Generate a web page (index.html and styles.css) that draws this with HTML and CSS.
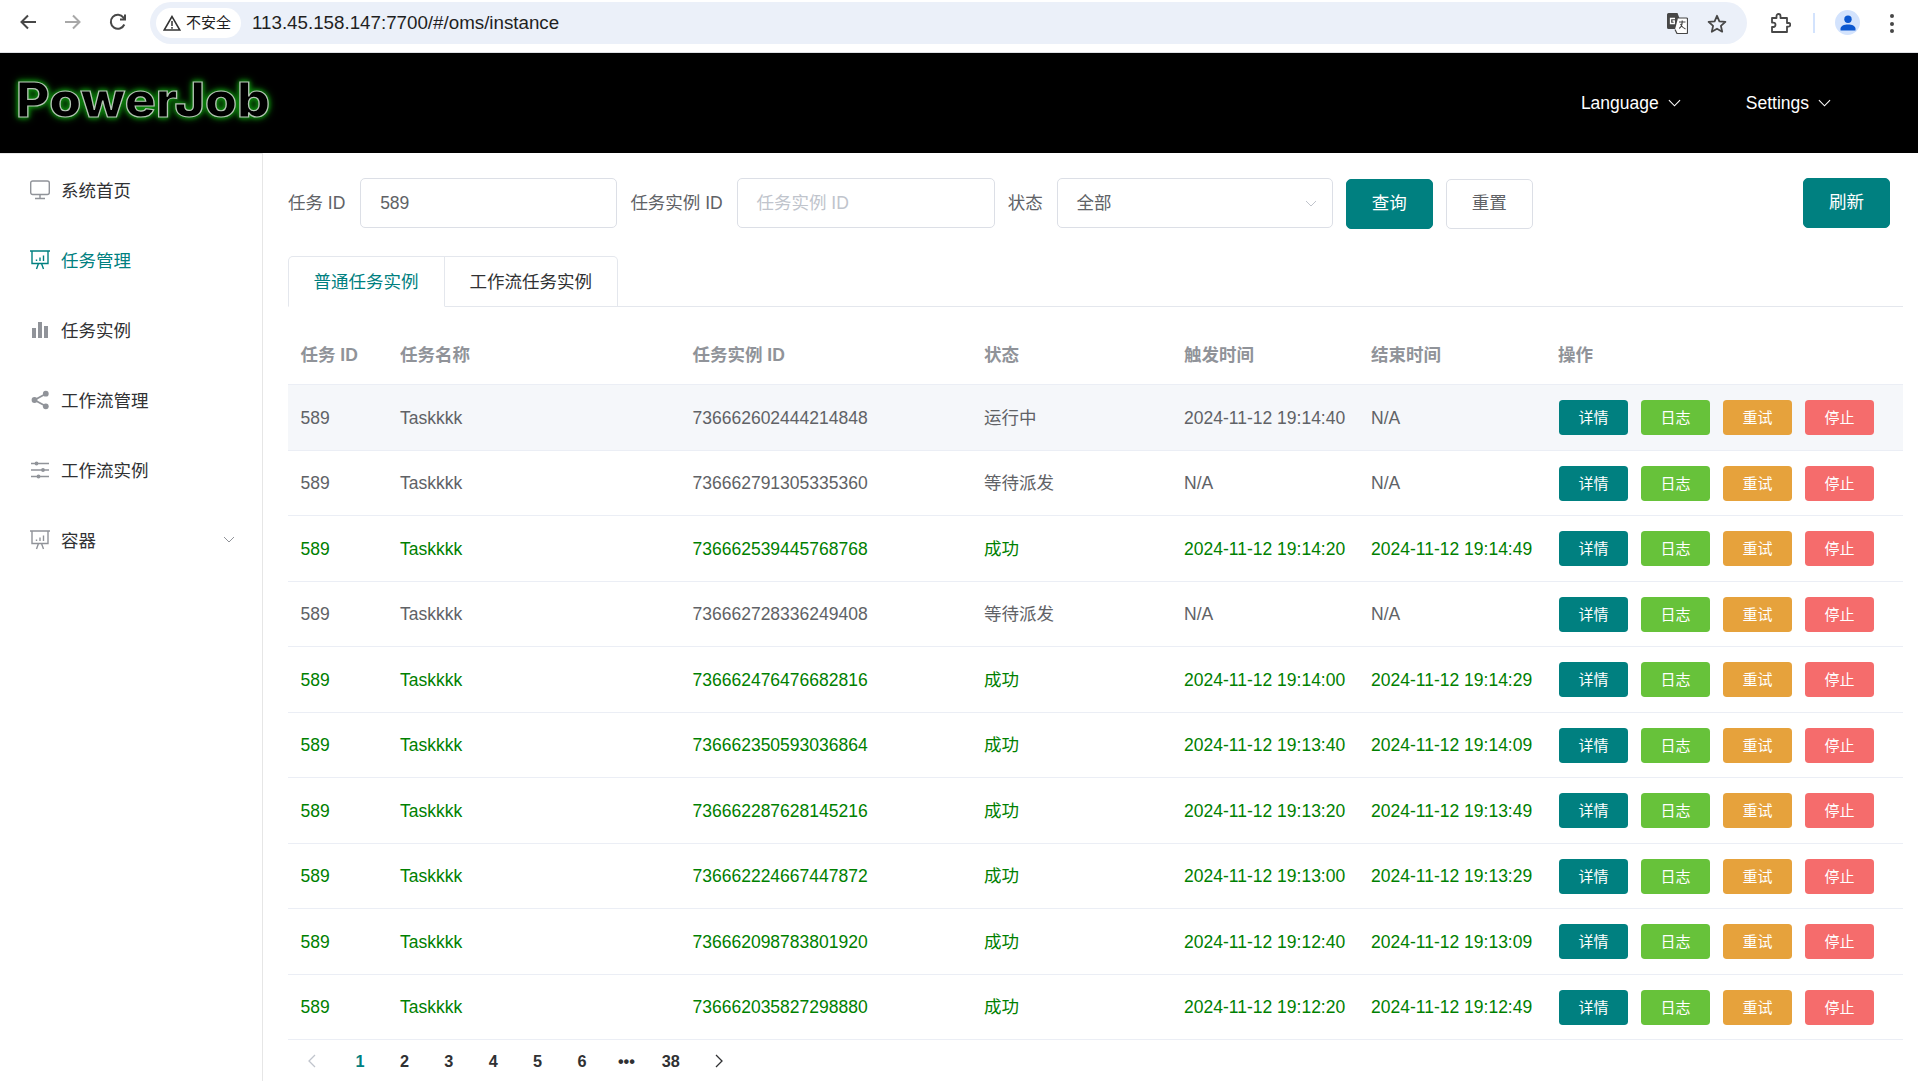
FILE: index.html
```html
<!DOCTYPE html>
<html lang="zh">
<head>
<meta charset="utf-8">
<title>PowerJob</title>
<link rel="stylesheet" href="styles.css">
</head>
<body>
<div class="toolbar">
  <div class="nav">
    <svg class="nav-icon" viewBox="0 0 20 20"><path d="M18 10H4M10 3.500 3.500 10l6.500 6.500" class="st-dark"/></svg>
    <svg class="nav-icon" viewBox="0 0 20 20"><path d="M2 10h14M10 3.500l6.500 6.500-6.500 6.500" class="st-light"/></svg>
    <svg class="nav-icon" viewBox="0 0 20 20"><path d="M16.300 12.500A7 7 0 1 1 15.500 5.600L17 7.200M17 2.500v5h-5" class="st-dark"/></svg>
  </div>
  <div class="omnibox">
    <div class="chip">
      <svg class="warn" viewBox="0 0 18 16"><path d="M9 1.500 1.200 15h15.600Z" class="st-warn"/><path d="M9 6v5M9 12v1.700" class="st-warn"/></svg>
      <span>不安全</span>
    </div>
    <span class="url">113.45.158.147:7700/#/oms/instance</span>
    <svg class="translate" viewBox="0 0 21 21"><path d="M1.500 0h9l6 16h-15a1.500 1.500 0 0 1-1.500-1.500v-13A1.500 1.500 0 0 1 1.500 0Z" fill="#474747"/><path d="M8 5.500H3.500v5h3.800V8H5.500" fill="none" stroke="#fff" stroke-width="1.300"/><path d="M11 5h8.500A1 1 0 0 1 20.500 6v13.500a1 1 0 0 1-1 1H10l-2-4" fill="#fff" stroke="#474747" stroke-width="1.200"/><path d="M12 9h6.500M15.200 7.500V9c0 3-1 5-3 6.500M13.500 11c.8 2 2.500 4 5 5" fill="none" stroke="#474747" stroke-width="1.100"/></svg>
    <svg class="star" viewBox="0 0 20 19"><path d="M10 1.800 12.400 7.300l6 .6-4.500 4 1.300 5.800L10 14.700l-5.200 3 1.300-5.800-4.500-4 6-.6Z" class="st-dark2"/></svg>
  </div>
  <svg class="puzzle" viewBox="0 0 20 20"><path d="M1 5h4.500V3a2 2 0 0 1 4 0v2H16v5h1.500a1.800 1.800 0 0 1 0 3.600H16V19H1v-5h1.300a2.200 2.200 0 0 0 0-4.400H1Z" class="st-dark2"/></svg>
  <div class="sep"></div>
  <div class="avatar"><svg class="person" viewBox="0 0 16 16"><circle cx="8" cy="4.200" r="3.700" fill="#0b57d0"/><path d="M.5 15.500v-1.800C.5 11 4 9.500 8 9.500s7.500 1.500 7.500 4.200v1.800Z" fill="#0b57d0"/></svg></div>
  <div class="dots"><i></i><i></i><i></i></div>
</div>

<header class="header">
  <svg class="logo" viewBox="0 0 290 70"><text x="16" y="48" textLength="254" lengthAdjust="spacingAndGlyphs" class="logo-text">PowerJob</text></svg>
  <nav class="header-menu">
    <div class="header-item"><span>Language</span><svg class="caret" viewBox="0 0 14 8"><path d="M1 1l6 6 6-6"/></svg></div>
    <div class="header-item"><span>Settings</span><svg class="caret" viewBox="0 0 14 8"><path d="M1 1l6 6 6-6"/></svg></div>
  </nav>
</header>

<div class="layout">
  <aside class="sidebar">
    <div class="menu-item">
      <svg class="menu-icon" viewBox="0 0 20 20"><rect x=".7" y="1" width="18.600" height="13.500" rx="2" class="ic"/><path d="M10 14.500V18M5 18.500h10" class="ic"/></svg>
      <span>系统首页</span>
    </div>
    <div class="menu-item active">
      <svg class="menu-icon" viewBox="0 0 20 20"><path d="M0 1h20M2 1v12.500h16V1M6.500 19l2-5.500M13.500 19l-2-5.500" class="ic"/><path d="M6.500 9.500v1.500M10 7.500v3.500M13.500 5.500v5.500" class="ic"/></svg>
      <span>任务管理</span>
    </div>
    <div class="menu-item">
      <svg class="menu-icon" viewBox="0 0 20 20"><path d="M2 8h4v10H2ZM8 2h4v16H8ZM14 6h4v12h-4Z" class="ic-fill"/></svg>
      <span>任务实例</span>
    </div>
    <div class="menu-item">
      <svg class="menu-icon" viewBox="0 0 20 20"><path d="M15.500 4 4.500 10l11 6" class="ic-thick"/><circle cx="15.800" cy="3.700" r="2.900" class="ic-fill"/><circle cx="4.500" cy="10" r="2.900" class="ic-fill"/><circle cx="15.800" cy="16.300" r="2.900" class="ic-fill"/></svg>
      <span>工作流管理</span>
    </div>
    <div class="menu-item">
      <svg class="menu-icon" viewBox="0 0 20 20"><path d="M1 3.500h18M1 10h18M1 16.500h18" class="ic"/><circle cx="6.500" cy="3.500" r="1.900" class="ic-fill"/><circle cx="13" cy="10" r="1.900" class="ic-fill"/><circle cx="8.500" cy="16.500" r="1.900" class="ic-fill"/></svg>
      <span>工作流实例</span>
    </div>
    <div class="menu-item">
      <svg class="menu-icon" viewBox="0 0 20 20"><path d="M0 1h20M2 1v12.500h16V1M6.500 19l2-5.500M13.500 19l-2-5.500" class="ic"/><path d="M6.500 9.500v1.500M10 7.500v3.500M13.500 5.500v5.500" class="ic"/></svg>
      <span>容器</span>
      <svg class="menu-caret" viewBox="0 0 12 7"><path d="M1 1l5 5 5-5"/></svg>
    </div>
  </aside>

  <main class="main">
    <div class="form">
      <label class="label">任务 ID</label>
      <div class="input w1">589</div>
      <label class="label label-tight">任务实例 ID</label>
      <div class="input w2 placeholder">任务实例 ID</div>
      <label class="label label-tight">状态</label>
      <div class="input w3">全部<svg class="select-caret" viewBox="0 0 12 7"><path d="M1 1l5 5 5-5"/></svg></div>
      <button class="btn btn-primary btn-low">查询</button>
      <button class="btn btn-plain btn-low">重置</button>
      <button class="btn btn-primary btn-right">刷新</button>
    </div>

    <div class="tabs">
      <div class="tab tab-active">普通任务实例</div>
      <div class="tab">工作流任务实例</div>
    </div>

    <table class="table">
      <colgroup>
        <col class="c1"><col class="c2"><col class="c3"><col class="c4"><col class="c5"><col class="c6"><col class="c7">
      </colgroup>
      <thead>
        <tr><th>任务 ID</th><th>任务名称</th><th>任务实例 ID</th><th>状态</th><th>触发时间</th><th>结束时间</th><th>操作</th></tr>
      </thead>
      <tbody>
        <tr class="row-hover"><td>589</td><td>Taskkkk</td><td>736662602444214848</td><td>运行中</td><td>2024-11-12 19:14:40</td><td>N/A</td><td><div class="ops"><span class="op op-teal">详情</span><span class="op op-green">日志</span><span class="op op-orange">重试</span><span class="op op-red">停止</span></div></td></tr>
        <tr><td>589</td><td>Taskkkk</td><td>736662791305335360</td><td>等待派发</td><td>N/A</td><td>N/A</td><td><div class="ops"><span class="op op-teal">详情</span><span class="op op-green">日志</span><span class="op op-orange">重试</span><span class="op op-red">停止</span></div></td></tr>
        <tr class="ok"><td>589</td><td>Taskkkk</td><td>736662539445768768</td><td>成功</td><td>2024-11-12 19:14:20</td><td>2024-11-12 19:14:49</td><td><div class="ops"><span class="op op-teal">详情</span><span class="op op-green">日志</span><span class="op op-orange">重试</span><span class="op op-red">停止</span></div></td></tr>
        <tr><td>589</td><td>Taskkkk</td><td>736662728336249408</td><td>等待派发</td><td>N/A</td><td>N/A</td><td><div class="ops"><span class="op op-teal">详情</span><span class="op op-green">日志</span><span class="op op-orange">重试</span><span class="op op-red">停止</span></div></td></tr>
        <tr class="ok"><td>589</td><td>Taskkkk</td><td>736662476476682816</td><td>成功</td><td>2024-11-12 19:14:00</td><td>2024-11-12 19:14:29</td><td><div class="ops"><span class="op op-teal">详情</span><span class="op op-green">日志</span><span class="op op-orange">重试</span><span class="op op-red">停止</span></div></td></tr>
        <tr class="ok"><td>589</td><td>Taskkkk</td><td>736662350593036864</td><td>成功</td><td>2024-11-12 19:13:40</td><td>2024-11-12 19:14:09</td><td><div class="ops"><span class="op op-teal">详情</span><span class="op op-green">日志</span><span class="op op-orange">重试</span><span class="op op-red">停止</span></div></td></tr>
        <tr class="ok"><td>589</td><td>Taskkkk</td><td>736662287628145216</td><td>成功</td><td>2024-11-12 19:13:20</td><td>2024-11-12 19:13:49</td><td><div class="ops"><span class="op op-teal">详情</span><span class="op op-green">日志</span><span class="op op-orange">重试</span><span class="op op-red">停止</span></div></td></tr>
        <tr class="ok"><td>589</td><td>Taskkkk</td><td>736662224667447872</td><td>成功</td><td>2024-11-12 19:13:00</td><td>2024-11-12 19:13:29</td><td><div class="ops"><span class="op op-teal">详情</span><span class="op op-green">日志</span><span class="op op-orange">重试</span><span class="op op-red">停止</span></div></td></tr>
        <tr class="ok"><td>589</td><td>Taskkkk</td><td>736662098783801920</td><td>成功</td><td>2024-11-12 19:12:40</td><td>2024-11-12 19:13:09</td><td><div class="ops"><span class="op op-teal">详情</span><span class="op op-green">日志</span><span class="op op-orange">重试</span><span class="op op-red">停止</span></div></td></tr>
        <tr class="ok"><td>589</td><td>Taskkkk</td><td>736662035827298880</td><td>成功</td><td>2024-11-12 19:12:20</td><td>2024-11-12 19:12:49</td><td><div class="ops"><span class="op op-teal">详情</span><span class="op op-green">日志</span><span class="op op-orange">重试</span><span class="op op-red">停止</span></div></td></tr>
      </tbody>
    </table>

    <div class="pager">
      <div class="page page-prev"><svg class="page-arrow" viewBox="0 0 8 14"><path d="M7 1 1 7l6 6"/></svg></div>
      <div class="page page-current">1</div>
      <div class="page">2</div>
      <div class="page">3</div>
      <div class="page">4</div>
      <div class="page">5</div>
      <div class="page">6</div>
      <div class="page">•••</div>
      <div class="page">38</div>
      <div class="page page-next"><svg class="page-arrow" viewBox="0 0 8 14"><path d="M1 1l6 6-6 6"/></svg></div>
    </div>
  </main>
</div>
</body>
</html>
```
FILE: styles.css
```css
* { box-sizing: border-box; }
html, body { margin: 0; padding: 0; height: 1081px; overflow: hidden; background: #fff; }
body { font-family: "Liberation Sans", "Noto Sans CJK SC", sans-serif; font-size: 17.5px; color: #606266; }

/* browser toolbar */
.toolbar { display: flex; align-items: flex-start; height: 53px; border-bottom: 1px solid #dfe1e5; background: #fff; }
.nav { display: flex; gap: 25px; width: 150px; padding: 12px 0 0 18px; }
.nav-icon { width: 20px; height: 20px; flex: none; }
.st-dark, .st-light, .st-dark2, .st-warn { fill: none; stroke-width: 2; }
.st-dark { stroke: #474747; }
.st-light { stroke: #a8a8a8; }
.st-dark2 { stroke: #474747; stroke-width: 1.8; stroke-linejoin: round; }
.st-warn { stroke: #333; stroke-width: 1.5; }
.omnibox { display: flex; align-items: center; width: 1597px; height: 42px; margin-top: 2px; padding: 0 20px 0 6px; border-radius: 21px; background: #ebf0f9; }
.chip { display: flex; align-items: center; gap: 5px; width: 85px; height: 30px; padding-left: 7px; border-radius: 15px; background: #fff; color: #1f1f1f; font-size: 15px; line-height: 30px; }
.warn { width: 18px; height: 16px; flex: none; }
.url { margin-left: 11px; font-size: 18.750px; color: #1f1f1f; font-family: "Liberation Sans", sans-serif; }
.translate { width: 21px; height: 21px; margin-left: auto; flex: none; }
.star { width: 20px; height: 19px; margin-left: 19px; flex: none; }
.puzzle { width: 20px; height: 20px; margin: 13px 0 0 24px; flex: none; }
.sep { width: 2px; height: 20px; margin: 13px 0 0 22px; background: #d3e3fd; }
.avatar { display: flex; align-items: center; justify-content: center; width: 25px; height: 25px; margin: 10px 0 0 20px; border-radius: 50%; background: #d3e3fd; }
.person { width: 16px; height: 16px; }
.dots { display: flex; flex-direction: column; gap: 3.500px; margin: 14px 0 0 30px; }
.dots i { display: block; width: 4px; height: 4px; border-radius: 50%; background: #474747; }

/* app header */
.header { display: flex; align-items: center; justify-content: space-between; height: 100px; background: #000; }
.logo { width: 290px; height: 70px; flex: none; margin-top: 1px; }
.logo-text { font-family: "Inter", sans-serif; font-weight: 800; font-size: 48px; fill: #000; stroke: #b4c4b4; stroke-width: 1.200; filter: drop-shadow(0 0 2px #0c8a0c) drop-shadow(0 0 3px #0c8a0c); }
.header-menu { display: flex; gap: 65px; padding-right: 87px; color: #fff; }
.header-item { display: flex; align-items: center; gap: 9px; }
.caret { width: 13px; height: 8px; fill: none; stroke: #fff; stroke-width: 1.200; }

/* layout */
.layout { display: flex; height: 928px; }
.sidebar { flex: none; width: 263px; border-top: 1px solid #e6e6e6; border-right: 1px solid #e6e6e6; color: #303133; }
.menu-item { display: flex; align-items: center; gap: 11px; height: 70px; padding-left: 30px; }
.menu-item.active { color: #008080; }
.menu-icon { width: 20px; height: 20px; flex: none; margin-top: 2px; color: #909399; }
.active .menu-icon { color: #008080; }
.ic { fill: none; stroke: currentColor; stroke-width: 1.400; }
.ic-thick { fill: none; stroke: currentColor; stroke-width: 1.800; }
.ic-fill { fill: currentColor; }
.menu-caret { width: 12px; height: 7px; margin-left: auto; margin-right: 27px; fill: none; stroke: #909399; stroke-width: 1; }

/* content */
.main { flex: none; width: 1655px; padding: 25px 15px 0 25px; }
.form { display: flex; align-items: flex-start; height: 50px; padding-right: 13px; }
.label { flex: none; margin-right: 15px; line-height: 50px; }
.label-tight { margin-right: 14px; }
.input { position: relative; flex: none; height: 50px; margin-right: 13px; padding-left: 18.750px; border: 1px solid #dcdfe6; border-radius: 5px; line-height: 48px; }
.w1 { width: 257px; }
.w2 { width: 258px; }
.w3 { width: 276px; margin-right: 13px; }
.placeholder { color: #c0c4cc; }
.select-caret { position: absolute; right: 15px; top: 21px; width: 12px; height: 7px; fill: none; stroke: #c0c4cc; stroke-width: 1; }
.btn { flex: none; width: 87px; height: 50px; padding: 0 0 2px; border-radius: 5px; font: inherit; line-height: 20px; }
.btn-low { margin-top: 1px; margin-right: 13px; }
.btn-right { margin-left: auto; }
.btn-primary { border: 1px solid #008080; background: #008080; color: #fff; }
.btn-plain { border: 1px solid #dcdfe6; background: #fff; color: #606266; }
.tabs { display: flex; height: 51px; margin-top: 28px; border-bottom: 1px solid #e4e7ed; }
.tab { height: 51px; padding: 0 25px; border: 1px solid #e4e7ed; border-left: 0; color: #303133; line-height: 50px; }
.tab:last-child { border-top-right-radius: 5px; }
.tab-active { padding-left: 24.500px; border-left: 1px solid #e4e7ed; border-bottom-color: #fff; border-top-left-radius: 5px; color: #008080; }

/* table */
.table { width: 1615px; margin-top: 18px; border-collapse: separate; border-spacing: 0; table-layout: fixed; }
.c1 { width: 99.500px; }
.c2 { width: 292.500px; }
.c3 { width: 291.500px; }
.c4 { width: 200px; }
.c5 { width: 187px; }
.c6 { width: 187px; }
.c7 { width: 357.500px; }
.table th, .table td { padding: 0 0 0 12.500px; border-bottom: 1px solid #ebeef5; line-height: 20px; text-align: left; white-space: nowrap; }
.table th { height: 60.400px; color: #909399; font-weight: 700; }
.table td { height: 65.500px; }
.row-hover td { background: #f5f7fa; }
.ok td { color: #008000; }
.ops { display: flex; gap: 13px; margin-left: 1px; }
.op { width: 69px; height: 35px; border-radius: 3.750px; color: #fff; font-size: 15px; line-height: 35px; text-align: center; }
.op-teal { background: #008080; }
.op-green { background: #67c23a; }
.op-orange { background: #e6a23c; }
.op-red { background: #f56c6c; }

/* pagination */
.pager { display: flex; align-items: center; height: 41px; padding: 1px 0 0 2.300px; color: #303133; font-size: 16.250px; font-weight: 700; }
.page { flex: none; width: 44.400px; text-align: center; }
.page-prev { margin-right: 3.200px; }
.page-next { margin-left: 4.300px; }
.page-current { color: #008080; }
.page-arrow { display: block; width: 8px; height: 14px; margin: 0 auto; fill: none; stroke: #303133; stroke-width: 1.300; }
.page-prev .page-arrow { stroke: #c0c4cc; }
```
